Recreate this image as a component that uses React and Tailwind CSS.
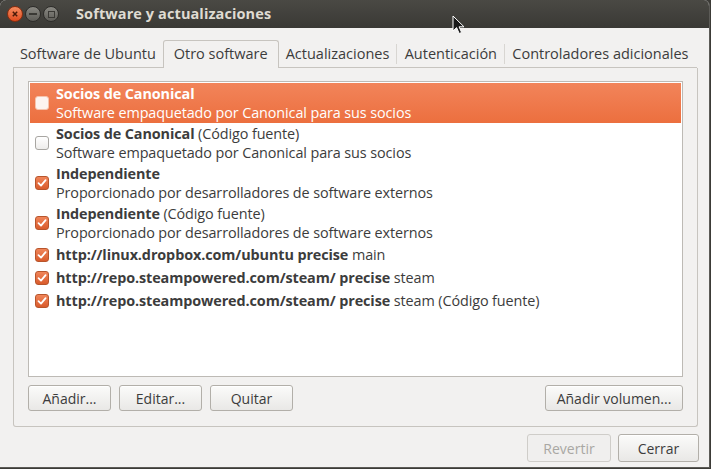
import React from "react";

const font = { fontFamily: '"Open Sans", "Noto Sans", sans-serif' };

const Check = ({ checked, onOrange }) =>
  checked ? (
    <div className="w-[14px] h-[14px] rounded-[3px] border border-[#b8552c] bg-gradient-to-b from-[#f08559] to-[#d95b2b] flex items-center justify-center shrink-0">
      <svg width="10" height="10" viewBox="0 0 10 10">
        <path d="M1.5 5.2 L4 7.6 L8.6 2.2" stroke="white" strokeWidth="1.8" fill="none" strokeLinecap="round" strokeLinejoin="round" />
      </svg>
    </div>
  ) : (
    <div
      className={
        "w-[14px] h-[14px] rounded-[3px] border shrink-0 " +
        (onOrange ? "border-[#f6c3ac] bg-[#fdf4f0]" : "border-[#a8a6a2] bg-gradient-to-b from-white to-[#eeedeb]")
      }
    />
  );

const Btn = ({ children, className = "", disabled }) => (
  <div
    className={
      "h-[26px] rounded-[3px] border flex items-center justify-center text-[14px] " +
      (disabled
        ? "border-[#cfcdc9] bg-[#f0efee] text-[#a9a7a3] "
        : "border-[#b2afa9] bg-gradient-to-b from-[#fbfbfa] to-[#e9e8e6] text-[#3c3c3c] shadow-[inset_0_1px_0_white] ") +
      className
    }
  >
    {children}
  </div>
);

const rows = [
  { title: "Socios de Canonical", extra: "", sub: "Software empaquetado por Canonical para sus socios", checked: false, selected: true },
  { title: "Socios de Canonical", extra: " (Código fuente)", sub: "Software empaquetado por Canonical para sus socios", checked: false },
  { title: "Independiente", extra: "", sub: "Proporcionado por desarrolladores de software externos", checked: true },
  { title: "Independiente", extra: " (Código fuente)", sub: "Proporcionado por desarrolladores de software externos", checked: true },
  { title: "http://linux.dropbox.com/ubuntu precise", extra: " main", checked: true },
  { title: "http://repo.steampowered.com/steam/ precise", extra: " steam", checked: true },
  { title: "http://repo.steampowered.com/steam/ precise", extra: " steam (Código fuente)", checked: true },
];

export default function App() {
  return (
    <div style={font} className="relative w-[711px] h-[469px] overflow-hidden bg-[#3c3b37]">
      <div className="w-[710px] h-[468px] flex flex-col bg-[#f2f1f0] border-r border-b border-[#5c5b57] rounded-t-[6px] overflow-hidden">
        {/* title bar */}
        <div className="h-[28px] shrink-0 bg-gradient-to-b from-[#4a4944] to-[#3a3935] flex items-center pl-[7px]">
          <div className="w-[16px] h-[16px] rounded-full bg-gradient-to-b from-[#f58b5e] to-[#df4a1c] border border-[#8a2e10] flex items-center justify-center">
            <svg width="8" height="8" viewBox="0 0 8 8">
              <path d="M1.8 1.8 L6.2 6.2 M6.2 1.8 L1.8 6.2" stroke="#4a1a08" strokeWidth="1.5" />
            </svg>
          </div>
          <div className="w-[16px] h-[16px] ml-[2px] rounded-full bg-gradient-to-b from-[#8a8983] to-[#5e5d58] border border-[#2e2d2a] flex items-center justify-center">
            <div className="w-[8px] h-[2px] bg-[#3a3935]" />
          </div>
          <div className="w-[16px] h-[16px] ml-[2px] rounded-full bg-gradient-to-b from-[#8a8983] to-[#5e5d58] border border-[#2e2d2a] flex items-center justify-center">
            <div className="w-[7px] h-[7px] border-[1.5px] border-[#3a3935]" />
          </div>
          <div className="ml-[17px] text-[14.5px] font-bold text-[#dfdbd2] tracking-[0.1px]">Software y actualizaciones</div>
        </div>

        {/* content */}
        <div className="flex-1 flex flex-col pl-[13px] pr-[12px] pt-[12px]">
          {/* tabs */}
          <div className="flex h-[28px] items-stretch text-[14.5px] text-[#3c3c3c]">
            <div className="w-[150px] flex items-center justify-center border-b border-[#c7c4bf] pt-[1px]">Software de Ubuntu</div>
            <div className="w-[116px] flex items-center justify-center border border-b-0 border-[#c7c4bf] rounded-t-[3px] bg-[#f2f1f0] pb-[1px]">Otro software</div>
            <div className="w-[118px] flex items-center justify-center border-b border-[#c7c4bf] pt-[1px]">Actualizaciones</div>
            <div className="w-[108px] flex items-center justify-center border-b border-[#c7c4bf] pt-[1px]">
              <div className="h-[20px] w-[1px] bg-[#d8d6d2] mr-auto" />
              <span>Autenticación</span>
              <div className="ml-auto" />
            </div>
            <div className="w-[193px] flex items-center border-b border-[#c7c4bf] pt-[1px]">
              <div className="h-[20px] w-[1px] bg-[#d8d6d2]" />
              <span className="ml-[7px]">Controladores adicionales</span>
            </div>
          </div>

          {/* panel */}
          <div className="w-[685px] h-[359px] border border-t-0 border-[#c7c4bf] rounded-b-[3px] px-[14px] pt-[13px] flex flex-col">
            <div className="h-[296px] bg-white border border-[#bdbab5] p-[1px] text-[14.4px] leading-[19px] text-[#3c3c3c]">
              {rows.map((r, i) => (
                <div
                  key={i}
                  className={
                    "flex items-center pl-[5px] " +
                    (r.sub ? "h-[40px] " : "h-[23px] ") +
                    (r.selected ? "bg-gradient-to-b from-[#f2845a] to-[#ec6f3e] text-white" : "")
                  }
                >
                  <Check checked={r.checked} onOrange={r.selected} />
                  <div className="ml-[7px] whitespace-nowrap tracking-[-0.1px]">
                    <div>
                      <span className="font-bold">{r.title}</span>
                      {r.extra}
                    </div>
                    {r.sub && <div>{r.sub}</div>}
                  </div>
                </div>
              ))}
            </div>
            <div className="flex mt-[8px]">
              <Btn className="w-[83px]">Añadir...</Btn>
              <Btn className="w-[83px] ml-[8px]">Editar...</Btn>
              <Btn className="w-[83px] ml-[8px]">Quitar</Btn>
              <Btn className="w-[138px] ml-auto">Añadir volumen...</Btn>
            </div>
          </div>

          {/* bottom buttons */}
          <div className="flex justify-end mt-[7px]">
            <Btn disabled className="w-[84px] h-[28px]">Revertir</Btn>
            <Btn className="w-[81px] h-[28px] ml-[7px] -mr-[2px]">Cerrar</Btn>
          </div>
        </div>
      </div>

      {/* mouse cursor */}
      <svg className="absolute left-[452px] top-[15px]" width="14" height="20" viewBox="0 0 14 20">
        <path d="M1 1 L1 16 L4.6 12.6 L7.2 18.5 L9.6 17.5 L7.1 11.8 L12 11.8 Z" fill="#1a1a1a" stroke="white" strokeWidth="1" strokeLinejoin="round" />
      </svg>
    </div>
  );
}
